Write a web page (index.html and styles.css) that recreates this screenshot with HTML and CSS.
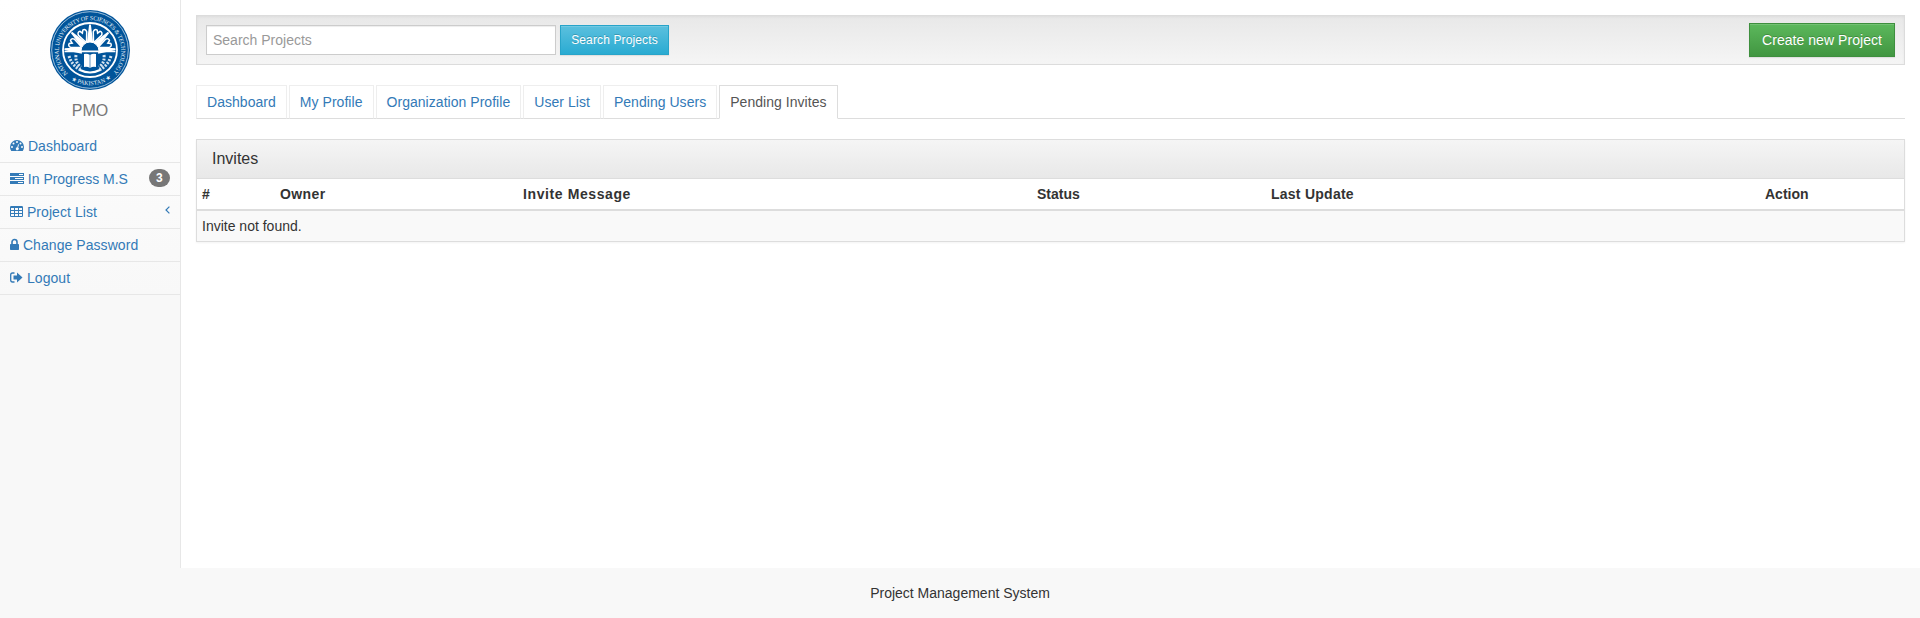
FILE: index.html
```html
<!DOCTYPE html>
<html lang="en">
<head>
<meta charset="utf-8">
<title>Project Management System</title>
<link rel="stylesheet" href="styles.css">
</head>
<body>
<div class="layout">
  <aside class="sidebar">
    <div class="sidebar-inner">
      <div class="brand">
        <svg class="logo" viewBox="0 0 80 80">
          <defs>
            <path id="ring-top" d="M20.800 66 A31.300 31.300 0 1 1 59.200 66"/>
            <path id="ring-bottom" d="M14 64 A35.600 35.600 0 0 0 66 64"/>
            <clipPath id="disc"><circle cx="40" cy="40" r="25.600"/></clipPath>
            <path id="heart" d="M0 -9 L-4.500 -19 Q-4.500 -22.500 -1.500 -22 L0 -19.500 L1.500 -22 Q4.500 -22.500 4.500 -19 Z" fill="#00549a" stroke="#fff" stroke-width="1.500"/>
            <path id="ray" d="M-3.200 -8 L-.8 -27 H.8 L3.200 -8 Z" fill="#fff"/>
          </defs>
          <circle cx="40" cy="40" r="40" fill="#00549a"/>
          <circle cx="40" cy="40" r="38.300" fill="none" stroke="#c5d9ea" stroke-width=".8"/>
          <circle cx="40" cy="40" r="27" fill="#00549a" stroke="#fff" stroke-width="1.800"/>
          <text class="logo-text"><textPath href="#ring-top" startOffset="4" textLength="146">NATIONAL UNIVERSITY OF SCIENCES &amp; TECHNOLOGY</textPath></text>
          <text class="logo-text"><textPath href="#ring-bottom" startOffset="9" textLength="43">★ PAKISTAN ★</textPath></text>
          <g clip-path="url(#disc)">
            <g transform="translate(40 41)">
              <use href="#ray" transform="rotate(-86)"/>
              <use href="#ray" transform="rotate(-45)"/>
              <use href="#ray"/>
              <use href="#ray" transform="rotate(45)"/>
              <use href="#ray" transform="rotate(86)"/>
              <use href="#heart" transform="rotate(-66)"/>
              <use href="#heart" transform="rotate(-23)"/>
              <use href="#heart" transform="rotate(23)"/>
              <use href="#heart" transform="rotate(66)"/>
            </g>
            <path d="M14 41.500H66" stroke="#fff" stroke-width="1.500"/>
            <path d="M31 41A9 9 0 0 1 49 41Z" fill="#00549a" stroke="#fff" stroke-width="1"/>
            <path d="M19 46q3 10 12 14M61 46q-3 10-12 14M26 45q-1 8 5 12M54 45q1 8-5 12" fill="none" stroke="#d5e3ef" stroke-width="3" stroke-dasharray="2 1.300"/>
            <path d="M34 44q3-1 6 1 3-2 6-1V57q-3-1-6 1-3-2-6-1Z" fill="#fff"/>
            <path d="M40 45V58" stroke="#00549a" stroke-width=".6"/>
            <path d="M30 60q10 5 20 0" fill="none" stroke="#fff" stroke-width="2"/>
          </g>
        </svg>
        <span class="brand-name">PMO</span>
      </div>
      <ul class="menu">
        <li><a href="#"><svg class="icon" width="14" height="14" viewBox="0 0 14 14"><path fill="currentColor" fill-rule="evenodd" d="M0 8a7 7 0 0 1 14 0q0 2.100-1.100 3.800-.2.200-.400.200h-11q-.200 0-.400-.200Q0 10.100 0 8ZM2 7a1 1 0 1 0 0 2 1 1 0 0 0 0-2ZM3.500 3.500a1 1 0 1 0 0 2 1 1 0 0 0 0-2ZM7 2a1 1 0 1 0 0 2 1 1 0 0 0 0-2ZM10.500 3.500a1 1 0 1 0 0 2 1 1 0 0 0 0-2ZM12 7a1 1 0 1 0 0 2 1 1 0 0 0 0-2ZM8.100 5.200L7.300 8.200A1.500 1.500 0 1 0 8.200 8.500L9 5.500Z"/></svg> Dashboard</a></li>
        <li><a class="tight" href="#"><svg class="icon" width="14" height="14" viewBox="0 0 14 14"><path fill="currentColor" fill-rule="evenodd" d="M0 1h14v3H0ZM0 5h14v3H0ZM0 9h14v3H0ZM9 2v1h4V2ZM5 6v1h8V6ZM8 10v1h5v-1Z"/></svg> In Progress M.S</a><span class="badge">3</span></li>
        <li><a href="#"><svg class="icon" width="13" height="14" viewBox="0 0 13 14"><path fill="currentColor" fill-rule="evenodd" d="M1.200 1h10.600Q13 1 13 2.200v8.600q0 1.200-1.200 1.200H1.200Q0 12 0 10.800V2.200Q0 1 1.200 1ZM1 3v2h3V3ZM5 3v2h3V3ZM9 3v2h3V3ZM1 6v2h3V6ZM5 6v2h3V6ZM9 6v2h3V6ZM1 9v2h3V9ZM5 9v2h3V9ZM9 9v2h3V9Z"/></svg> Project List</a><svg class="chevron" width="5" height="8" viewBox="0 0 5 8"><path d="M4.400.6L1 4 4.400 7.400" fill="none" stroke="currentColor" stroke-width="1.200"/></svg></li>
        <li><a href="#"><svg class="icon" width="9" height="14" viewBox="0 0 9 14"><path d="M2 7V4a2.500 2.500 0 0 1 5 0V7" fill="none" stroke="currentColor" stroke-width="1.600"/><rect y="6" width="9" height="6" rx=".7" fill="currentColor"/></svg> Change Password</a></li>
        <li><a href="#"><svg class="icon" width="13" height="14" viewBox="0 0 13 14"><path d="M4.500 2H2.500Q.700 2 .700 3.900v5.200Q.700 11 2.500 11H4.500" fill="none" stroke="currentColor" stroke-width="1.300"/><path d="M3.500 4.500H7V1.500L12.500 6.500 7 11.500V8.500H3.500Z" fill="currentColor"/></svg> Logout</a></li>
      </ul>
    </div>
  </aside>
  <main class="content">
    <div class="toolbar">
      <input class="search" type="text" placeholder="Search Projects">
      <button class="btn btn-info">Search Projects</button>
      <button class="btn btn-success">Create new Project</button>
    </div>
    <ul class="tabs">
      <li><a href="#">Dashboard</a></li>
      <li><a href="#">My Profile</a></li>
      <li><a href="#">Organization Profile</a></li>
      <li><a href="#">User List</a></li>
      <li><a href="#">Pending Users</a></li>
      <li><a class="active" href="#">Pending Invites</a></li>
    </ul>
    <section class="panel">
      <h3 class="panel-title">Invites</h3>
      <table class="table">
        <colgroup><col class="c-num"><col class="c-owner"><col class="c-message"><col class="c-status"><col class="c-update"><col></colgroup>
        <thead><tr><th>#</th><th class="h-owner">Owner</th><th class="h-message">Invite Message</th><th>Status</th><th class="h-update">Last Update</th><th>Action</th></tr></thead>
        <tbody><tr><td colspan="6">Invite not found.</td></tr></tbody>
      </table>
    </section>
  </main>
</div>
<footer class="footer">Project Management System</footer>
</body>
</html>
```
FILE: styles.css
```css
* { box-sizing: border-box; }
body {
  margin: 0;
  background: #f8f8f8;
  color: #333;
  font: 14px/20px "Liberation Sans", Arial, sans-serif;
}
a { color: #337ab7; text-decoration: none; }
ul { list-style: none; margin: 0; padding: 0; }

.layout { display: flex; height: 568px; }
.sidebar { width: 180px; flex: none; }
.sidebar-inner { height: 295px; background: linear-gradient(#fff, #f8f8f8); }
.brand { height: 130px; padding-top: 10px; display: flex; flex-direction: column; align-items: center; }
.logo { width: 80px; height: 80px; display: block; }
.logo-text { font: 6px "Liberation Serif", serif; fill: #eef4f9; }
.brand-name { margin-top: 11px; font-size: 16px; color: #777; }
.menu li {
  height: 33px;
  padding: 6px 10px;
  border-bottom: 1px solid #e7e7e7;
  display: flex;
  justify-content: space-between;
}
.menu a { white-space: nowrap; letter-spacing: .06px; }
.menu .tight { letter-spacing: -.02px; }
.icon { vertical-align: -2px; }
.badge {
  height: 18px;
  min-width: 21px;
  padding: 3px 7px;
  border-radius: 10px;
  background: #777;
  color: #fff;
  font-size: 12px;
  font-weight: bold;
  line-height: 12px;
}
.chevron { color: #337ab7; margin-top: 4px; }

.content { flex: 1; background: #fff; border-left: 1px solid #e7e7e7; padding: 15px 15px 0; }
.toolbar {
  height: 50px;
  padding: 0 9px;
  display: flex;
  align-items: center;
  gap: 4px;
  border: 1px solid #dcdcdc;
  background: linear-gradient(#e8e8e8, #f5f5f5);
  box-shadow: inset 0 1px 3px rgba(0,0,0,.05), 0 1px 0 rgba(255,255,255,.1);
}
.search {
  width: 350px;
  height: 30px;
  padding: 5px 6px;
  border: 1px solid #ccc;
  border-radius: 0;
  font: inherit;
  box-shadow: inset 0 1px 1px rgba(0,0,0,.075);
}
.search::placeholder { color: #999; }
.btn {
  color: #fff;
  border: 1px solid;
  padding: 0;
  text-shadow: 0 -1px 0 rgba(0,0,0,.2);
  box-shadow: inset 0 1px 0 rgba(255,255,255,.15), 0 1px 1px rgba(0,0,0,.075);
}
.btn-info {
  width: 109px;
  height: 30px;
  font: 12px/18px "Liberation Sans", Arial, sans-serif;
  letter-spacing: .13px;
  background: linear-gradient(#5bc0de, #2aabd2);
  border-color: #28a4c9;
}
.btn-success {
  width: 146px;
  height: 34px;
  margin-left: auto;
  font: 14px/20px "Liberation Sans", Arial, sans-serif;
  letter-spacing: .05px;
  background: linear-gradient(#5cb85c, #419641);
  border-color: #3e8f3e;
}

.tabs { display: flex; gap: 2px; margin-top: 20px; height: 34px; border-bottom: 1px solid #ddd; letter-spacing: .04px; }
.tabs a { display: block; height: 34px; padding: 6px 10px; border: 1px solid #eee; border-bottom-color: #ddd; white-space: nowrap; }
.tabs .active { color: #555; background: #fff; border-color: #ddd; border-bottom-color: #fff; }

.panel { margin-top: 20px; border: 1px solid #ddd; box-shadow: 0 1px 2px rgba(0,0,0,.05); }
.panel-title {
  margin: 0;
  height: 39px;
  padding: 10px 15px;
  border-bottom: 1px solid #ddd;
  background: linear-gradient(#f5f5f5, #e8e8e8);
  font-size: 16px;
  font-weight: normal;
  line-height: 18px;
}
.table { width: 100%; table-layout: fixed; border-collapse: separate; border-spacing: 0; }
.c-num { width: 78px; }
.c-owner { width: 243px; }
.c-message { width: 514px; }
.c-status { width: 234px; }
.c-update { width: 494px; }
.table th, .table td { padding: 5px; text-align: left; }
.table th { border-bottom: 2px solid #ddd; }
.table td { background: #f9f9f9; }
.h-owner { letter-spacing: .4px; }
.h-message { letter-spacing: .6px; }
.h-update { letter-spacing: .25px; }

.footer { height: 50px; padding-top: 15px; text-align: center; }
```
